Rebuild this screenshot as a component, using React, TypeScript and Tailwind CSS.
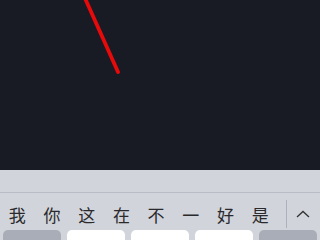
export default function App() {
  const candidates = ["我", "你", "这", "在", "不", "一", "好", "是"];
  return (
    <div className="flex h-[240px] w-[320px] flex-col overflow-hidden bg-[#d1d4db] font-['Noto_Sans_CJK_SC',sans-serif]">
      <div className="h-[170px] bg-[#181a24]">
        <svg width="320" height="170" viewBox="0 0 320 170">
          <line x1="84" y1="-4" x2="118" y2="72" stroke="#e60a0a" strokeWidth="3.8" strokeLinecap="round" />
        </svg>
      </div>
      <div className="h-[25px] border-b border-[#b9bcc4]" />
      <div className="flex h-[39px] items-center pt-[5px]">
        {candidates.map((c) => (
          <span key={c} className="w-[34.7px] text-center text-[17px] leading-none text-[#2a2a2c]">
            {c}
          </span>
        ))}
        <div className="ml-[8px] h-[28px] w-px bg-[#aeb1b9]" />
        <div className="flex flex-1 justify-center">
          <svg width="14" height="8" viewBox="0 0 14 8">
            <path d="M1 7 L7 1.5 L13 7" fill="none" stroke="#333" strokeWidth="1.3" />
          </svg>
        </div>
      </div>
      <div className="grid grid-cols-5 gap-[6px] px-[3px]">
        <div className="h-[10px] rounded-t-[5px] bg-[#a9adb7]" />
        <div className="h-[10px] rounded-t-[5px] bg-white" />
        <div className="h-[10px] rounded-t-[5px] bg-white" />
        <div className="h-[10px] rounded-t-[5px] bg-white" />
        <div className="h-[10px] rounded-t-[5px] bg-[#a9adb7]" />
      </div>
    </div>
  );
}
